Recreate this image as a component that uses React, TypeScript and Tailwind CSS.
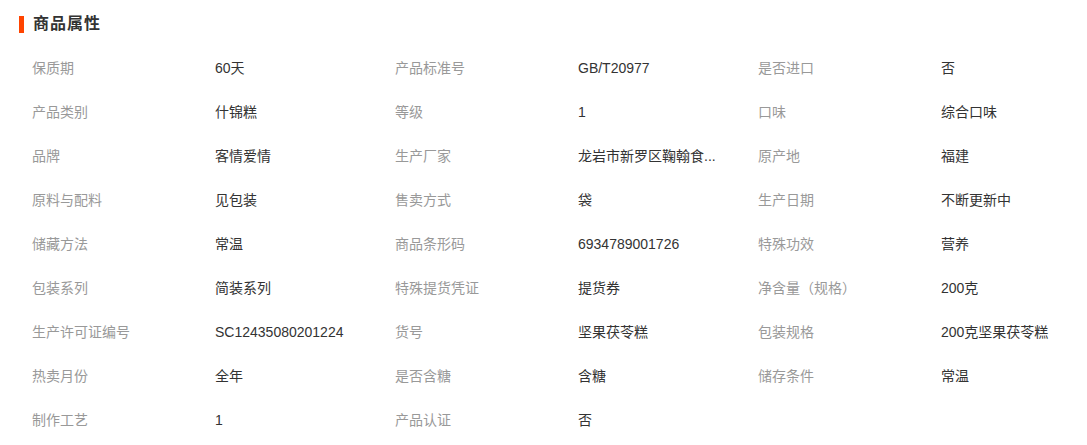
import React from "react";

const rows: [string, string][][] = [
  [["保质期", "60天"], ["产品标准号", "GB/T20977"], ["是否进口", "否"]],
  [["产品类别", "什锦糕"], ["等级", "1"], ["口味", "综合口味"]],
  [["品牌", "客情爱情"], ["生产厂家", "龙岩市新罗区鞠翰食..."], ["原产地", "福建"]],
  [["原料与配料", "见包装"], ["售卖方式", "袋"], ["生产日期", "不断更新中"]],
  [["储藏方法", "常温"], ["商品条形码", "6934789001726"], ["特殊功效", "营养"]],
  [["包装系列", "简装系列"], ["特殊提货凭证", "提货券"], ["净含量（规格）", "200克"]],
  [["生产许可证编号", "SC12435080201224"], ["货号", "坚果茯苓糕"], ["包装规格", "200克坚果茯苓糕"]],
  [["热卖月份", "全年"], ["是否含糖", "含糖"], ["储存条件", "常温"]],
  [["制作工艺", "1"], ["产品认证", "否"]],
];

export default function App() {
  return (
    <div
      className="w-[1087px] h-[445px] bg-white overflow-hidden"
      style={{ fontFamily: '"Liberation Sans", "Noto Sans CJK SC", sans-serif' }}
    >
      <div className="h-[46px] pt-[2px] pl-[19px] flex items-center">
        <div className="w-[5px] h-[17px] bg-[#ff4400]" />
        <div className="ml-[9px] text-[16px] font-bold tracking-[1px] text-[#333]">商品属性</div>
      </div>
      <div className="pl-[32px]">
        {rows.map((row, i) => (
          <div key={i} className="flex h-[44px] items-center text-[14px]">
            {row.map(([k, v], j) => (
              <React.Fragment key={j}>
                <div className="w-[183px] shrink-0 text-[#999] whitespace-nowrap">{k}</div>
                <div className="w-[180px] shrink-0 text-[#333] whitespace-nowrap">{v}</div>
              </React.Fragment>
            ))}
          </div>
        ))}
      </div>
    </div>
  );
}
